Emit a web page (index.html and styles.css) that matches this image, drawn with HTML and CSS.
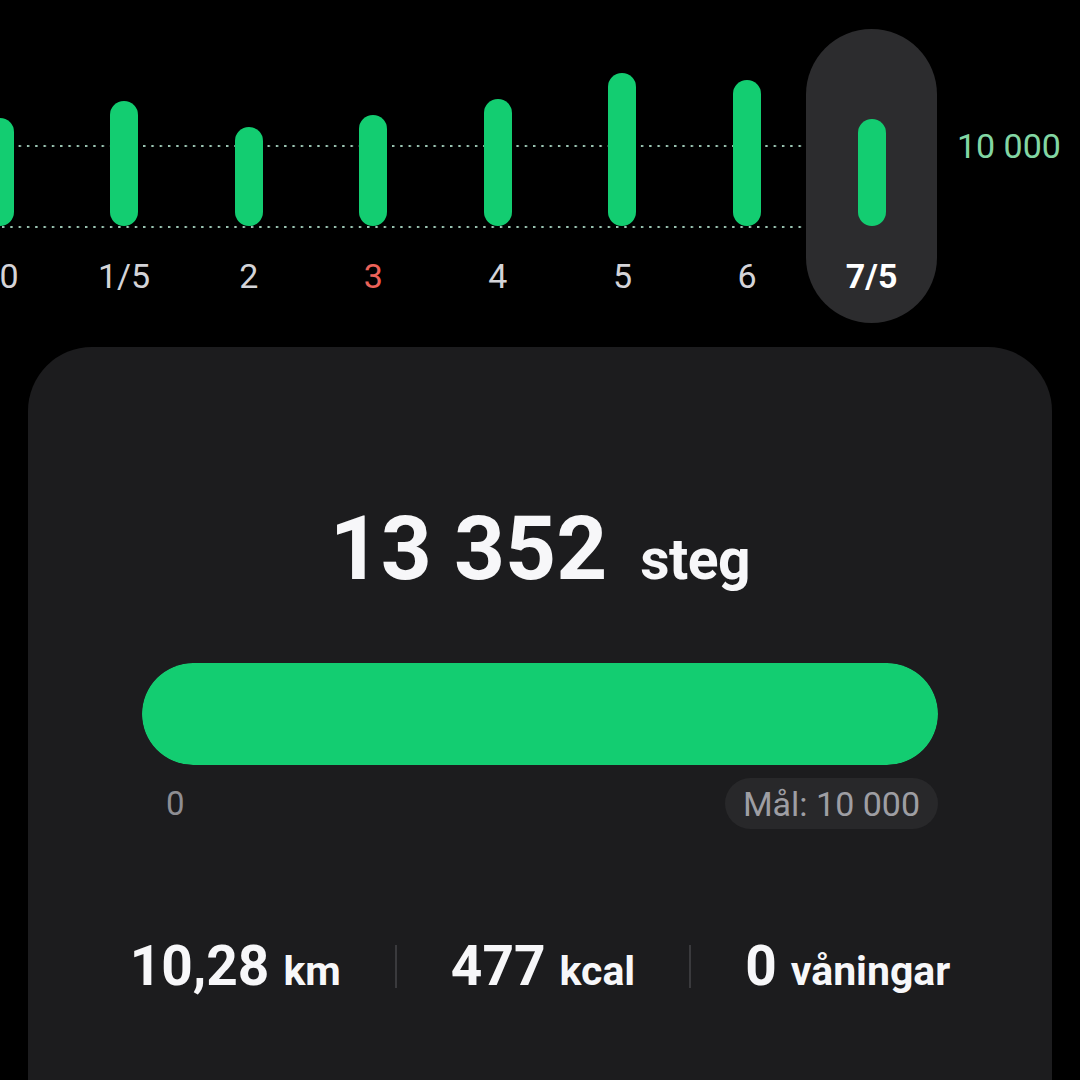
FILE: index.html
```html
<!DOCTYPE html>
<html lang="sv">
<head>
<meta charset="utf-8">
<title>Steg</title>
<link rel="stylesheet" href="styles.css">
</head>
<body>
<main class="screen">
  <section class="chart">
    <div class="days">
      <div class="day"><div class="plot"><div class="bar" style="height:108px"></div></div><span class="label">30</span></div>
      <div class="day"><div class="plot"><div class="bar" style="height:125px"></div></div><span class="label">1/5</span></div>
      <div class="day"><div class="plot"><div class="bar" style="height:99px"></div></div><span class="label">2</span></div>
      <div class="day"><div class="plot"><div class="bar" style="height:111px"></div></div><span class="label label-red">3</span></div>
      <div class="day"><div class="plot"><div class="bar" style="height:127px"></div></div><span class="label">4</span></div>
      <div class="day"><div class="plot"><div class="bar" style="height:153px"></div></div><span class="label">5</span></div>
      <div class="day"><div class="plot"><div class="bar" style="height:146px"></div></div><span class="label">6</span></div>
      <div class="day day-active"><div class="plot"><div class="bar" style="height:107px"></div></div><span class="label">7/5</span></div>
    </div>
    <span class="goal-line">10 000</span>
  </section>

  <section class="card">
    <div class="total">
      <span class="total-num">13 352</span>
      <span class="total-unit">steg</span>
    </div>
    <div class="progress"><div class="progress-fill" style="width:100%"></div></div>
    <div class="scale">
      <span class="scale-min">0</span>
      <span class="scale-goal">Mål: 10 000</span>
    </div>
    <div class="stats">
      <div class="stat"><span class="stat-num">10,28</span><span class="stat-unit">km</span></div>
      <div class="sep"></div>
      <div class="stat"><span class="stat-num">477</span><span class="stat-unit">kcal</span></div>
      <div class="sep"></div>
      <div class="stat"><span class="stat-num">0</span><span class="stat-unit">våningar</span></div>
    </div>
  </section>
</main>
</body>
</html>
```

FILE: styles.css
```css
html {
  background: #000;
}

body {
  margin: 0;
  padding: 0;
  width: 1080px;
  height: 1080px;
  overflow: hidden;
  font-family: Roboto, "Noto Sans", "Liberation Sans", sans-serif;
  color: #fff;
}

.screen {
  width: 1080px;
}

/* ---------- chart ---------- */
.chart {
  position: relative;
  isolation: isolate;
  display: flex;
  align-items: flex-start;
  padding-top: 29px;
  height: 294px;
}

.chart::before {
  content: "";
  position: absolute;
  left: 0;
  top: 145px;
  width: 803px;
  height: 83px;
  z-index: -2;
  background-image:
    radial-gradient(circle at 1.2px 1.2px, #9cc6b4 1.1px, transparent 1.5px),
    radial-gradient(circle at 1.2px 1.2px, #9cc6b4 1.1px, transparent 1.5px);
  background-size: 8.3px 2.4px, 8.3px 2.4px;
  background-repeat: repeat-x, repeat-x;
  background-position: 2px 0, 2px 100%;
}

.days {
  display: flex;
  margin-left: -62.8px;
}

.day {
  position: relative;
  width: 124.6px;
  height: 294px;
  display: flex;
  flex-direction: column;
  align-items: center;
  padding-top: 31px;
  box-sizing: border-box;
}

.day-active::before {
  content: "";
  position: absolute;
  top: 0;
  bottom: 0;
  left: -3px;
  right: -3px;
  border-radius: 66px;
  background: #2c2c2e;
  z-index: -1;
}

.plot {
  height: 166px;
  width: 28px;
  display: flex;
  align-items: flex-end;
}

.bar {
  width: 28px;
  border-radius: 14px;
  background: #13cd71;
}

.label {
  margin-top: 30px;
  font-size: 34px;
  line-height: 40px;
  color: #d4d4d8;
  white-space: nowrap;
}

.label-red {
  color: #ec6259;
}

.day-active .label {
  color: #fff;
  font-weight: 700;
}

.goal-line {
  margin-top: 97px;
  margin-left: 23px;
  font-size: 34px;
  line-height: 40px;
  color: #82d6a3;
  white-space: nowrap;
}

/* ---------- card ---------- */
.card {
  margin: 24px 28px 0;
  background: #1c1c1e;
  border-radius: 64px 64px 0 0;
  padding: 157px 114px 200px;
}

.total {
  display: flex;
  justify-content: center;
  align-items: baseline;
}

.total-num {
  font-size: 89px;
  line-height: 90px;
  font-weight: 700;
  color: #f7f7f9;
}

.total-unit {
  margin-left: 33px;
  font-size: 57px;
  line-height: 1;
  font-weight: 700;
  letter-spacing: -0.5px;
  color: #f7f7f9;
}

.progress {
  margin-top: 69px;
  height: 102px;
  border-radius: 51px;
  background: #2c2c2e;
  overflow: hidden;
}

.progress-fill {
  height: 100%;
  border-radius: 51px;
  background: #13cd71;
}

.scale {
  margin-top: 13px;
  display: flex;
  justify-content: space-between;
  align-items: center;
}

.scale-min {
  padding-left: 24px;
  font-size: 33px;
  color: #8e8e93;
}

.scale-goal {
  height: 51px;
  display: flex;
  align-items: center;
  padding: 0 18px;
  border-radius: 26px;
  background: #28282a;
  font-size: 34px;
  color: #9e9ea3;
}

.stats {
  margin-top: 110px;
  display: flex;
  justify-content: center;
  align-items: center;
  gap: 54px;
}

.stat {
  display: flex;
  align-items: baseline;
  white-space: nowrap;
}

.stat-num {
  font-size: 55px;
  line-height: 1;
  font-weight: 700;
  color: #f7f7f9;
}

.stat-unit {
  margin-left: 14px;
  font-size: 41px;
  line-height: 1;
  font-weight: 700;
  color: #f7f7f9;
}

.sep {
  flex: 0 0 2px;
  width: 2px;
  height: 43px;
  background: #3a3a3d;
}
```
